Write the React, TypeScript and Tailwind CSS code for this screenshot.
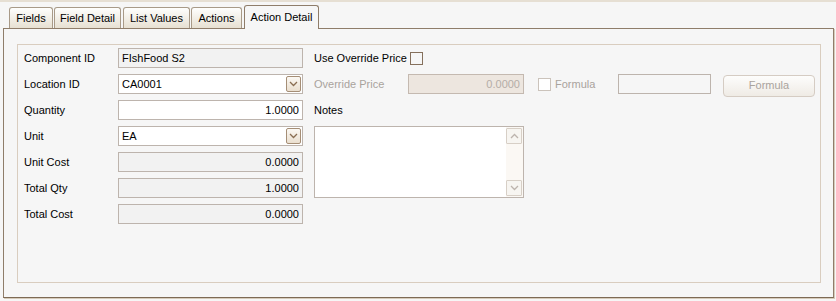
import React from "react";

const font = { fontFamily: '"Liberation Sans", Arial, sans-serif' };

function Chevron({ up = false, color = "#8a6e52" }: { up?: boolean; color?: string }) {
  return (
    <svg width="9" height="6" viewBox="0 0 9 6">
      <path
        d={up ? "M1 5 L4.5 1.5 L8 5" : "M1 1 L4.5 4.5 L8 1"}
        fill="none"
        stroke={color}
        strokeWidth="1.3"
      />
    </svg>
  );
}

function Label({ children, dim = false }: { children: React.ReactNode; dim?: boolean }) {
  return (
    <div className={`h-[20px] flex items-center text-[11px] ${dim ? "text-[#a9a39d]" : "text-black"}`}>
      {children}
    </div>
  );
}

function Field({
  value,
  bg = "bg-[#f2f2f2]",
  right = false,
  combo = false,
  w = "w-[185px]",
}: {
  value: string;
  bg?: string;
  right?: boolean;
  combo?: boolean;
  w?: string;
}) {
  return (
    <div className={`${w} h-[20px] border border-[#bdb4ad] ${bg} flex items-center text-[11px] text-black`}>
      <div className={`flex-1 px-[3px] ${right ? "text-right" : ""}`}>{value}</div>
      {combo && (
        <div className="w-[15px] h-[16px] mr-[1px] rounded-[2px] border border-[#a58e76] bg-gradient-to-b from-[#fbf8f3] to-[#eadfcf] flex items-center justify-center">
          <Chevron />
        </div>
      )}
    </div>
  );
}

const tabCls =
  "h-[21px] flex items-center justify-center text-[11px] text-black border border-b-0 border-[#a89a88] rounded-t-[3px] bg-gradient-to-b from-[#fefefd] to-[#e7e0d2] whitespace-nowrap";

export default function App() {
  return (
    <div className="w-[836px] h-[301px] bg-[#f6f6f6] relative overflow-hidden" style={font}>
      <div className="h-[2px] bg-[#e6dfd3]" />
      {/* tabs */}
      <div className="flex items-end h-[26px]">
        <div className={`${tabCls} ml-[9px] w-[44px]`}>Fields</div>
        <div className={`${tabCls} ml-[1px] w-[67px]`}>Field Detail</div>
        <div className={`${tabCls} ml-[2px] w-[67px]`}>List Values</div>
        <div className={`${tabCls} ml-[1px] w-[51px]`}>Actions</div>
        <div className="h-[24px] -mb-[1px] ml-[2px] w-[75px] flex items-center justify-center whitespace-nowrap text-[11px] text-black border border-b-0 border-[#8f7d6a] rounded-t-[3px] bg-[#f6f6f6] relative z-10">
          Action Detail
        </div>
      </div>
      {/* panel */}
      <div className="ml-[3px] w-[831px] h-[270px] border border-[#8f7d6a] border-b-[#7d6a55] shadow-[1px_1px_0_#d6cbbb] pt-[15px] pl-[13px] pr-[12px]">
        <div className="h-[239px] border border-[#d9cdbf] flex pl-[6px] pt-[3px]">
          {/* left column */}
          <div className="grid grid-cols-[94px_185px] gap-y-[6px] auto-rows-[20px]">
            <Label>Component ID</Label>
            <Field value="FIshFood S2" />
            <Label>Location ID</Label>
            <Field value="CA0001" bg="bg-white" combo />
            <Label>Quantity</Label>
            <Field value="1.0000" bg="bg-white" right />
            <Label>Unit</Label>
            <Field value="EA" bg="bg-white" combo />
            <Label>Unit Cost</Label>
            <Field value="0.0000" right />
            <Label>Total Qty</Label>
            <Field value="1.0000" right />
            <Label>Total Cost</Label>
            <Field value="0.0000" right />
          </div>
          {/* right column */}
          <div className="ml-[11px] flex flex-col gap-y-[6px]">
            <div className="flex items-center h-[20px]">
              <div className="w-[96px] text-[11px] text-black">Use Override Price</div>
              <div className="w-[13px] h-[13px] border border-[#85705c] bg-[#f6f6f6]" />
            </div>
            <div className="flex items-center h-[20px]">
              <div className="w-[94px] text-[11px] text-[#a9a39d]">Override Price</div>
              <div className="w-[116px] h-[20px] border border-[#c4b9b0] bg-[#ede6df] text-[11px] text-[#b4ada7] text-right px-[3px] flex items-center justify-end">
                0.0000
              </div>
              <div className="ml-[14px] w-[13px] h-[13px] border border-[#cbc3bb] bg-white" />
              <div className="ml-[4px] w-[58px] text-[11px] text-[#a9a39d]">Formula</div>
              <div className="ml-[5px] w-[93px] h-[20px] border border-[#bdb4ad] bg-[#f6f6f6]" />
              <div className="ml-[12px] mt-[3px] w-[92px] h-[22px] border border-[#d5ccc3] rounded-[4px] bg-gradient-to-b from-[#fdfdfc] to-[#efebe5] text-[11px] text-[#a9a39d] flex items-center justify-center">
                Formula
              </div>
            </div>
            <div className="flex items-center h-[20px] text-[11px] text-black">Notes</div>
            <div className="w-[210px] h-[72px] border border-[#bdb4ad] bg-white flex justify-end">
              <div className="w-[17px] h-full bg-[#fbf8f4] flex flex-col justify-between pr-[1px] py-[1px]">
                <div className="w-[16px] h-[16px] border border-[#d7cfc6] rounded-[1px] bg-[#f7f5f1] flex items-center justify-center">
                  <Chevron up color="#bdb4ad" />
                </div>
                <div className="w-[16px] h-[16px] border border-[#d7cfc6] rounded-[1px] bg-[#f7f5f1] flex items-center justify-center">
                  <Chevron color="#bdb4ad" />
                </div>
              </div>
            </div>
          </div>
        </div>
      </div>
    </div>
  );
}
